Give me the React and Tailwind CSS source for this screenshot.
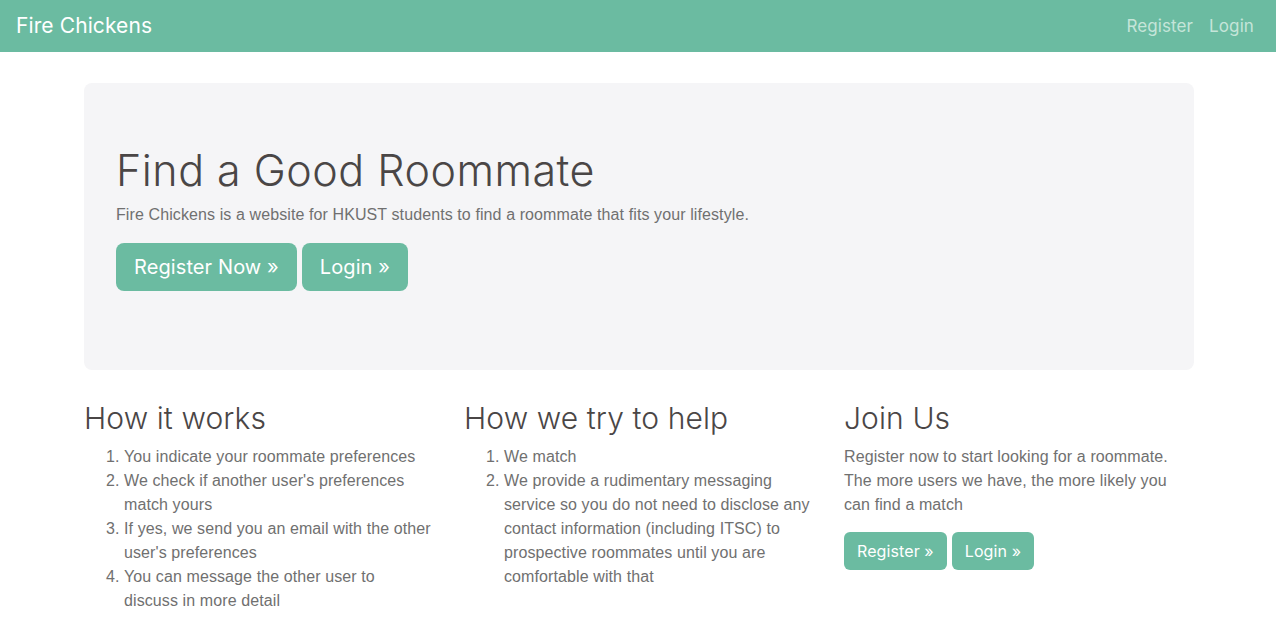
import React from 'react';

const heading = { fontFamily: 'Inter, "Noto Sans", sans-serif' };

const NavBar = () => (
  <nav className="flex h-[52px] items-center justify-between bg-[#6bbba1] pl-4 pr-[22px]">
    <a href="#" className="text-[21px] text-white" style={heading}>
      Fire Chickens
    </a>
    <div className="flex items-center gap-[16px] text-[17px] text-[#c5e5d9]" style={heading}>
      <a href="#">Register</a>
      <a href="#">Login</a>
    </div>
  </nav>
);

const Button = ({ children, big }) => (
  <a
    href="#"
    className={
      big
        ? 'inline-flex h-[48px] items-center rounded-lg bg-[#6bbba1] px-[18px] text-[20px] text-white'
        : 'inline-flex h-[38px] items-center rounded-md bg-[#6bbba1] px-[13px] text-[16px] text-white'
    }
    style={heading}
  >
    {children}
  </a>
);

const App = () => {
  return (
    <div
      className="min-h-screen bg-white text-[16px] leading-6 tracking-[0.1px] text-[#707070]"
      style={{ fontFamily: '"Liberation Sans", Arial, sans-serif' }}
    >
      <NavBar />

      <main className="ml-[84px] w-[1110px] pt-[31px]">
        <section className="rounded-lg bg-[#f5f5f7] px-8 pb-[79px] pt-[62px]">
          <h1
            className="text-[43px] font-light leading-[1.2] tracking-[0.5px] text-[#4a4646]"
            style={heading}
          >
            Find a Good Roommate
          </h1>
          <p className="mt-[6px] mb-4">
            Fire Chickens is a website for HKUST students to find a roommate that fits your lifestyle.
          </p>
          <div className="flex gap-[5px]">
            <Button big>Register Now »</Button>
            <Button big>Login »</Button>
          </div>
        </section>

        <section className="mt-[30px] grid grid-cols-3 gap-[30px]">
          <div>
            <h2 className="mb-[9px] text-[30px] font-light leading-[1.2] text-[#4a4646]" style={heading}>
              How it works
            </h2>
            <ol className="list-decimal pl-10">
              <li>You indicate your roommate preferences</li>
              <li>We check if another user's preferences match yours</li>
              <li>If yes, we send you an email with the other user's preferences</li>
              <li>
                You can message the other user to
                <br />
                discuss in more detail
              </li>
            </ol>
          </div>

          <div>
            <h2 className="mb-[9px] text-[30px] font-light leading-[1.2] text-[#4a4646]" style={heading}>
              How we try to help
            </h2>
            <ol className="list-decimal pl-10">
              <li>We match</li>
              <li>
                We provide a rudimentary messaging service so you do not need to disclose any
                contact information (including ITSC) to prospective roommates until you are
                comfortable with that
              </li>
            </ol>
          </div>

          <div>
            <h2 className="mb-[9px] text-[30px] font-light leading-[1.2] text-[#4a4646]" style={heading}>
              Join Us
            </h2>
            <p className="mb-[15px] pr-4">
              Register now to start looking for a roommate. The more users we have, the more likely
              you can find a match
            </p>
            <div className="flex gap-[5px]">
              <Button>Register »</Button>
              <Button>Login »</Button>
            </div>
          </div>
        </section>
      </main>
    </div>
  );
};

export default App;
